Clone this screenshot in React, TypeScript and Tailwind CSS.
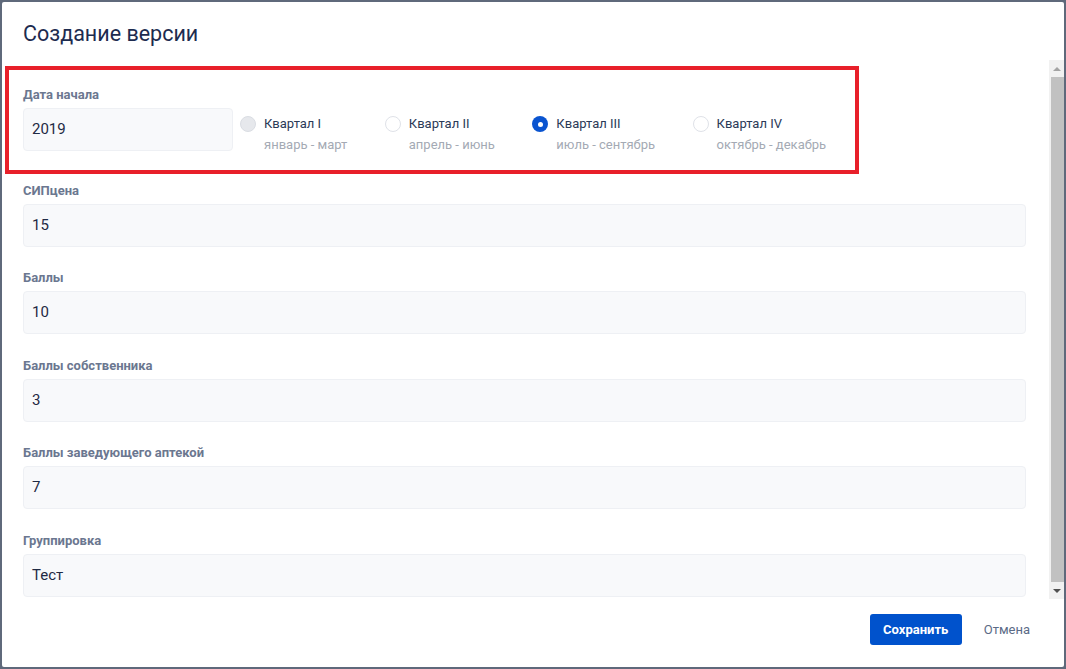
const quarters = [
  { title: 'Квартал I', months: 'январь - март', state: 'disabled' },
  { title: 'Квартал II', months: 'апрель - июнь', state: 'off' },
  { title: 'Квартал III', months: 'июль - сентябрь', state: 'on' },
  { title: 'Квартал IV', months: 'октябрь - декабрь', state: 'off' },
];

const fields = [
  { label: 'СИПцена', value: '15' },
  { label: 'Баллы', value: '10' },
  { label: 'Баллы собственника', value: '3' },
  { label: 'Баллы заведующего аптекой', value: '7' },
  { label: 'Группировка', value: 'Тест' },
];

function Radio({ state }: { state: string }) {
  if (state === 'on') {
    return (
      <span className="flex h-[16px] w-[16px] shrink-0 items-center justify-center rounded-full bg-[#0a54d0]">
        <span className="h-[5px] w-[5px] rounded-full bg-white" />
      </span>
    );
  }
  if (state === 'disabled') {
    return <span className="h-[16px] w-[16px] shrink-0 rounded-full border border-[#dadde3] bg-[#e6e8ec]" />;
  }
  return <span className="h-[16px] w-[16px] shrink-0 rounded-full border-[1.5px] border-[#dfe2e8] bg-white" />;
}

function Field({ label, value }: { label: string; value: string }) {
  return (
    <div className="mb-[23.5px]">
      <div className="mb-[5px] text-[13px] leading-[16px] font-bold text-[#6b7790]">{label}</div>
      <div className="flex h-[43px] items-center rounded-[4px] border border-[#eef0f4] bg-[#f8f9fb] px-[8px] text-[15px] text-[#1f2a44]">
        {value}
      </div>
    </div>
  );
}

export default function App() {
  return (
    <div
      className="relative h-[669px] w-full overflow-hidden bg-[#5f697b] pt-[2px] pl-[2px]"
      style={{ fontFamily: 'Roboto, "Liberation Sans", sans-serif' }}
    >
      <div className="flex h-[665px] w-[1062px] flex-col rounded-[2px] bg-white">
        <div className="flex h-[58px] shrink-0 items-center pl-[21px] pt-[6px]">
          <h1 className="text-[21.5px] font-normal text-[#1d2b4f]">Создание версии</h1>
        </div>

        <div className="flex h-[539px] shrink-0">
          <div className="relative flex-1 overflow-hidden pl-[21px] pr-[23px] pt-[27px]">
            <div className="mb-[23.5px]">
              <div className="mb-[5px] text-[13px] leading-[16px] font-bold text-[#6b7790]">Дата начала</div>
              <div className="flex">
                <div className="flex h-[43px] w-[210px] items-center rounded-[4px] border border-[#eef0f4] bg-[#f8f9fb] px-[8px] text-[15px] text-[#1f2a44]">
                  2019
                </div>
                <div className="ml-[7px] flex gap-[37.5px] pt-[8px]">
                  {quarters.map((q) => (
                    <div key={q.title} className="flex gap-[8px]">
                      <Radio state={q.state} />
                      <div className="-mt-[1px]">
                        <div className="text-[13px] leading-[17px] text-[#2b3a57]">{q.title}</div>
                        <div className="mt-[4px] text-[13px] leading-[17px] text-[#a4aab4]">{q.months}</div>
                      </div>
                    </div>
                  ))}
                </div>
              </div>
              <div className="h-[6px]" />
            </div>

            {fields.map((f) => (
              <Field key={f.label} label={f.label} value={f.value} />
            ))}
          </div>

          <div className="flex w-[15px] shrink-0 flex-col bg-[#f1f1f1]">
            <div className="flex h-[17px] items-center justify-center">
              <span className="h-0 w-0 border-x-[4px] border-b-[4px] border-x-transparent border-b-[#a3a3a3]" />
            </div>
            <div className="ml-[2px] flex-1 bg-[#c1c1c1]" />
            <div className="flex h-[17px] items-center justify-center">
              <span className="h-0 w-0 border-x-[4px] border-t-[4px] border-x-transparent border-t-[#505050]" />
            </div>
          </div>
        </div>

        <div className="flex items-start justify-end pr-[34px] pt-[15px]">
          <button className="h-[31px] w-[92px] rounded-[3px] bg-[#0052cc] text-[13px] font-bold text-white">
            Сохранить
          </button>
          <button className="ml-[22px] h-[31px] text-[13px] text-[#5b6b86]">Отмена</button>
        </div>
      </div>

      <div className="pointer-events-none absolute left-[5px] top-[66px] h-[108px] w-[854px] border-4 border-[#e8202a]" />
    </div>
  );
}
